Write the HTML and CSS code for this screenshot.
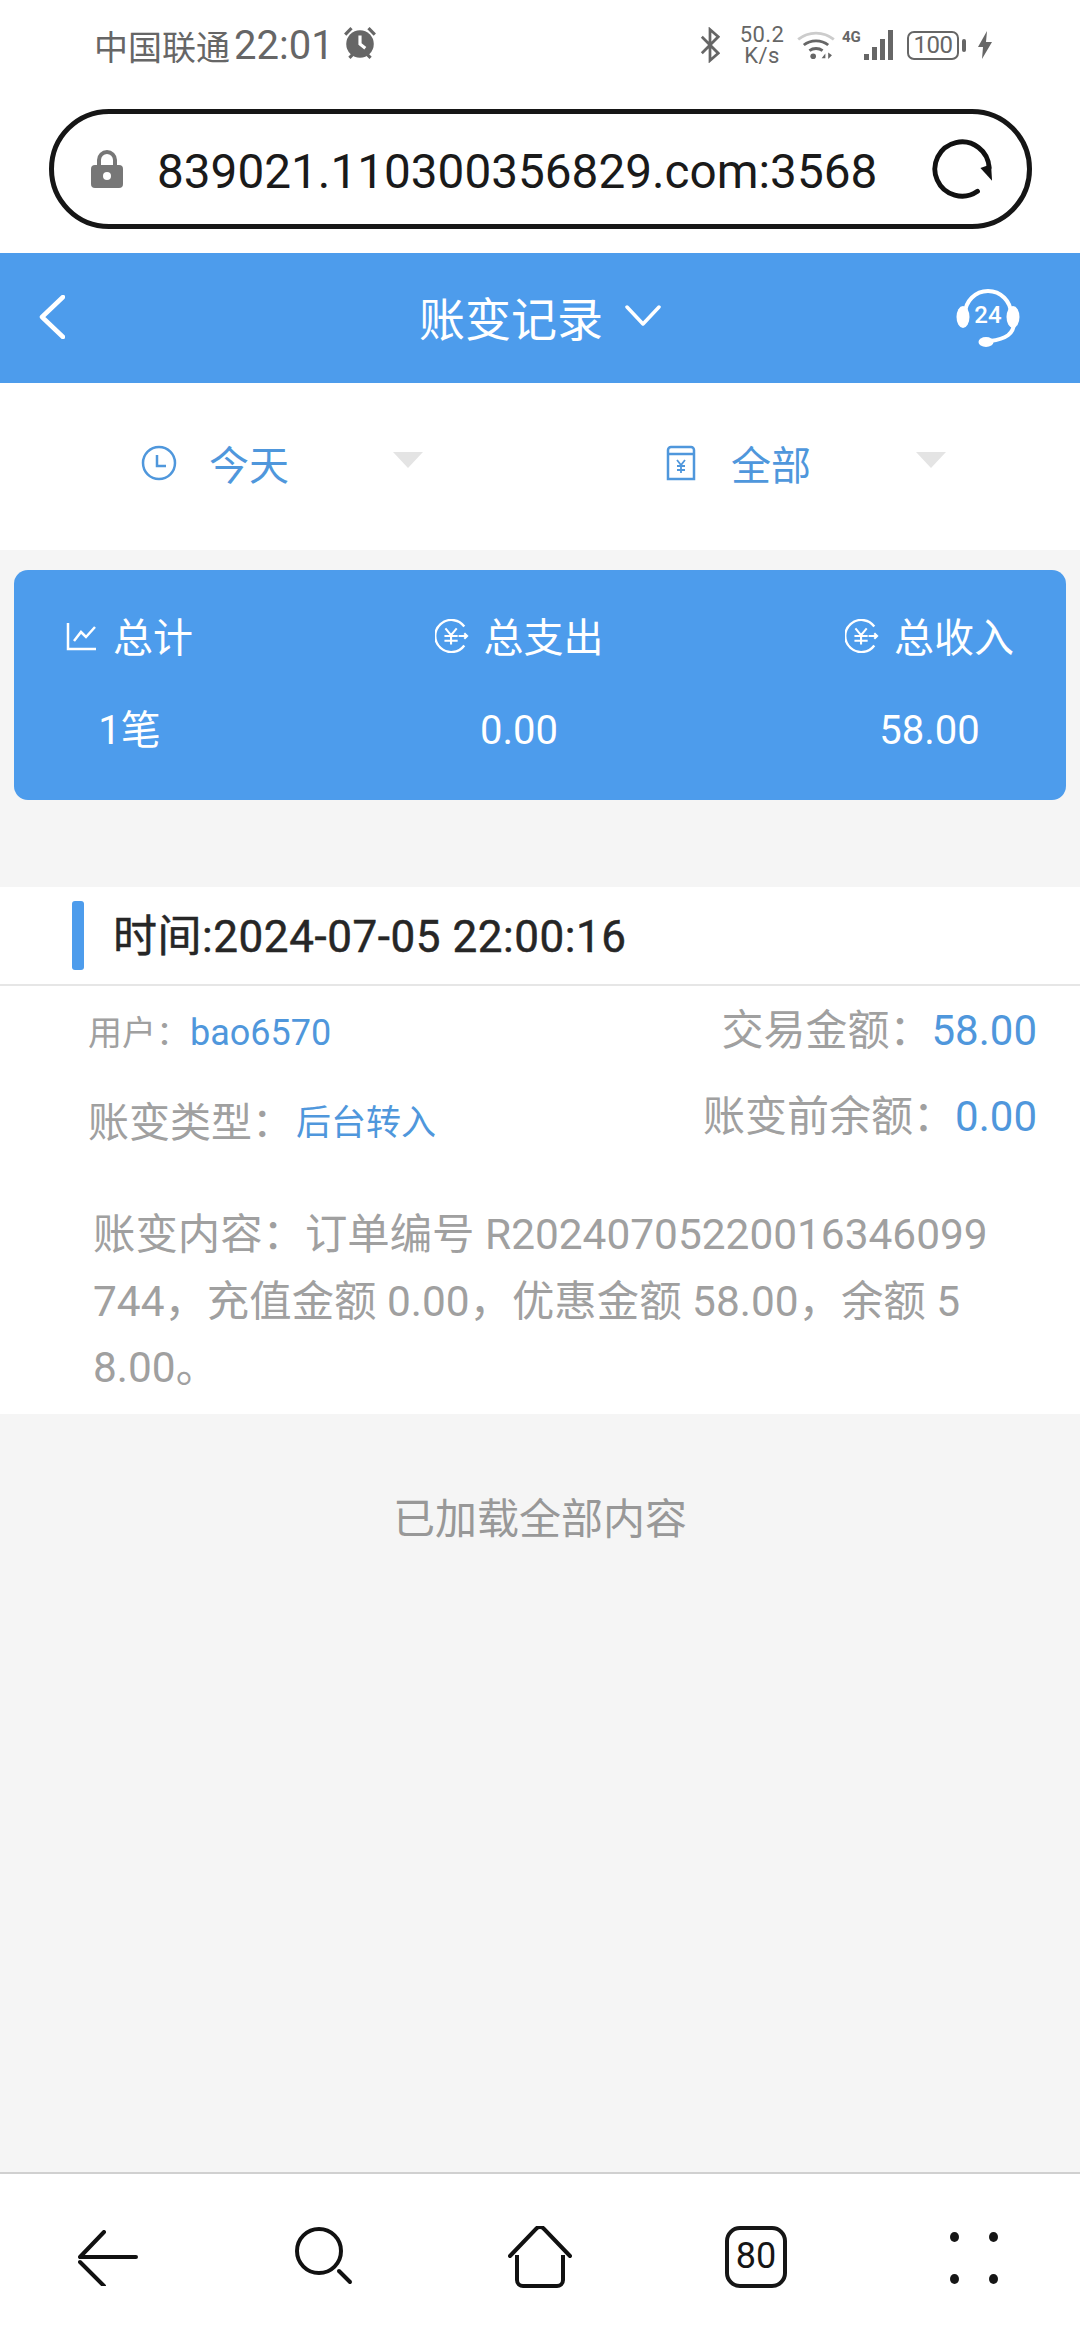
FILE: index.html
```html
<!DOCTYPE html>
<html lang="zh-CN">
<head>
<meta charset="utf-8">
<title>账变记录</title>
<link rel="stylesheet" href="styles.css">
</head>
<body>
<div class="phone">
  <div class="status">
    <div class="status-left">
      <span class="carrier">中国联通</span>
      <span class="clock">22:01</span>
      <svg class="alarm" viewBox="0 0 34 34"><circle cx="17" cy="18" r="13" fill="#666"/><path d="M17 10v8l5 4" stroke="#fff" stroke-width="3" fill="none"/><path d="M3 9l6-6M31 9l-6-6M7 31l3-3M27 31l-3-3" stroke="#666" stroke-width="3"/></svg>
    </div>
    <div class="status-right">
      <svg class="bt" viewBox="0 0 22 36"><path d="M2 9l18 18-9 8V1l9 8L2 27" fill="none" stroke="#666" stroke-width="3"/></svg>
      <span class="speed">50.2<br>K/s</span>
      <svg class="wifi" viewBox="0 0 40 32"><path d="M1 10c11-9 27-9 38 0" fill="none" stroke="#ccc" stroke-width="3"/><path d="M7 16c7-6 19-6 26 0M13 22c4-3 10-3 14 0" fill="none" stroke="#666" stroke-width="3"/><circle cx="17" cy="28" r="3" fill="#666"/><path d="M26 30l4-5v5zM33 24v7l4-4z" fill="#666"/></svg>
      <span class="net">4G</span>
      <div class="signal"><i class="s1"></i><i class="s2"></i><i class="s3"></i><i class="s4"></i></div>
      <div class="battery"><span>100</span></div>
      <i class="cap"></i>
      <svg class="bolt" viewBox="0 0 14 28"><path d="M9 0L0 16h5l-1 12 10-17H8z" fill="#666"/></svg>
    </div>
  </div>

  <div class="address-wrap">
    <div class="address">
      <svg class="lock" viewBox="0 0 32 38"><path d="M8 17V10a8 8 0 0 1 16 0v7" fill="none" stroke="#777" stroke-width="4"/><rect y="15" width="32" height="23" rx="4" fill="#777"/><circle cx="16" cy="26" r="4" fill="#fff"/></svg>
      <span class="url">839021.110300356829.com:3568</span>
      <svg class="reload" viewBox="0 0 64 64"><path d="M48 55A28 28 0 1 1 60 31" fill="none" stroke="#111" stroke-width="5" stroke-linecap="round"/><path d="M51 31l11-4 1 17z" fill="#111"/></svg>
    </div>
  </div>

  <header class="topbar">
    <svg class="nav-back" viewBox="0 0 26 44"><path d="M24 2L3 22l21 20" fill="none" stroke="#fff" stroke-width="4.5" stroke-linecap="round" stroke-linejoin="round"/></svg>
    <div class="title">账变记录<svg class="chev" viewBox="0 0 36 22"><path d="M2 2l16 17L34 2" fill="none" stroke="#fff" stroke-width="3.5" stroke-linecap="round" stroke-linejoin="round"/></svg></div>
    <div class="support">
      <svg viewBox="0 0 64 60"><path d="M9 26a23 23 0 0 1 46 0M58 34c0 12-8 17-24 19" fill="none" stroke="#fff" stroke-width="4"/><ellipse cx="7" cy="29" rx="6.5" ry="11" fill="#fff"/><ellipse cx="57" cy="29" rx="6.5" ry="11" fill="#fff"/><ellipse cx="30" cy="54" rx="7.5" ry="5" fill="#fff"/></svg>
      <span>24</span>
    </div>
  </header>

  <section class="filters">
    <div class="filter">
      <svg class="f-icon" viewBox="0 0 36 36"><circle cx="18" cy="18" r="16" fill="none" stroke="#4f97dc" stroke-width="2.5"/><path d="M16 10v11h9" fill="none" stroke="#4f97dc" stroke-width="2.5"/></svg>
      <span class="f-label">今天</span>
      <i class="caret"></i>
    </div>
    <div class="filter filter-type">
      <svg class="f-icon-b" viewBox="0 0 30 36"><path d="M2 9V5a3 3 0 0 1 3-3h20a3 3 0 0 1 3 3v4M2 9h26v25H2z" fill="none" stroke="#4f97dc" stroke-width="2.5"/><path d="M11 15l4 5 4-5M15 20v8M11 21h8M11 25h8" fill="none" stroke="#4f97dc" stroke-width="1.8"/></svg>
      <span class="f-label">全部</span>
      <i class="caret"></i>
    </div>
  </section>

  <section class="summary">
    <div class="col">
      <div class="col-head"><svg class="s-icon s-chart" viewBox="0 0 32 30"><path d="M2 2v26h28M8 20l7-9 5 5 9-10" fill="none" stroke="#fff" stroke-width="2.5"/></svg>总计</div>
      <div class="col-val">1笔</div>
    </div>
    <div class="col">
      <div class="col-head"><svg class="s-icon" viewBox="0 0 36 36"><path d="M31 8a17 17 0 1 0 0 20" fill="none" stroke="#fff" stroke-width="2.5"/><path d="M11 10l6 7 6-7M17 17v10M10 18h14M10 23h14M25 18h9M31 15l3 3-3 3" fill="none" stroke="#fff" stroke-width="2.2"/></svg>总支出</div>
      <div class="col-val">0.00</div>
    </div>
    <div class="col">
      <div class="col-head"><svg class="s-icon" viewBox="0 0 36 36"><path d="M31 8a17 17 0 1 0 0 20" fill="none" stroke="#fff" stroke-width="2.5"/><path d="M11 10l6 7 6-7M17 17v10M10 18h14M10 23h14M25 18h9M31 15l3 3-3 3" fill="none" stroke="#fff" stroke-width="2.2"/></svg>总收入</div>
      <div class="col-val">58.00</div>
    </div>
  </section>

  <article class="record">
    <div class="record-head"><i class="mark"></i><span>时间:2024-07-05 22:00:16</span></div>
    <div class="record-body">
      <div class="row row-a">
        <div class="user">用户：<b>bao6570</b></div>
        <div class="money">交易金额：<b>58.00</b></div>
      </div>
      <div class="row row-b">
        <div class="kind">账变类型：<b>后台转入</b></div>
        <div class="money">账变前余额：<b>0.00</b></div>
      </div>
      <p class="detail">账变内容：订单编号 R20240705220016346099<br>744，充值金额 0.00，优惠金额 58.00，余额 5<br>8.00。</p>
    </div>
  </article>

  <div class="loaded">已加载全部内容</div>

  <nav class="toolbar">
    <svg class="t-back" viewBox="0 0 60 56"><path d="M26 2L2 27h56M2 32l24 24" fill="none" stroke="#111" stroke-width="4" stroke-linecap="round" stroke-linejoin="round"/></svg>
    <svg class="t-search" viewBox="0 0 58 58"><circle cx="24" cy="24" r="22" fill="none" stroke="#111" stroke-width="4"/><path d="M44 44l11 11" stroke="#111" stroke-width="4" stroke-linecap="round"/></svg>
    <svg class="t-home" viewBox="0 0 64 62"><path d="M2 30L28 3a5 5 0 0 1 8 0l26 27" fill="none" stroke="#111" stroke-width="4" stroke-linecap="round"/><path d="M9 29v25a6 6 0 0 0 6 6h34a6 6 0 0 0 6-6V29" fill="none" stroke="#111" stroke-width="4"/></svg>
    <div class="t-tabs">80</div>
    <div class="t-more"><i></i><i></i><i></i><i></i></div>
  </nav>
</div>
</body>
</html>
```
FILE: styles.css
```css
* { box-sizing: border-box; margin: 0; padding: 0; }
html, body { width: 1080px; height: 2340px; overflow: hidden; }
body { font-family: Roboto, "Noto Sans CJK SC", sans-serif; background: #f5f5f5; }
i { display: block; font-style: normal; }
svg { display: block; flex: none; }

.phone { width: 1080px; height: 2340px; display: flex; flex-direction: column; }

/* system status row */
.status { height: 90px; background: #fff; padding: 0 88px 0 94px; display: flex; justify-content: space-between; align-items: center; color: #666; }
.status-left { display: flex; align-items: center; }
.carrier { font-size: 34px; }
.clock { font-size: 40px; margin-left: 4px; }
.alarm { width: 36px; height: 36px; margin: 0 0 4px 8px; }
.status-right { display: flex; align-items: center; }
.bt { width: 20px; height: 36px; }
.speed { width: 46px; margin-left: 19px; font-size: 22px; line-height: 21px; letter-spacing: 0.4px; text-align: center; }
.wifi { width: 38px; height: 30px; margin-left: 12px; }
.net { font-size: 15px; font-weight: 700; margin: -16px 0 0 7px; width: 19px; }
.signal { display: flex; align-items: flex-end; gap: 3px; height: 30px; width: 32px; margin-left: 3px; }
.signal i { width: 5px; background: #666; }
.signal .s1 { height: 6px; }
.signal .s2 { height: 13px; }
.signal .s3 { height: 21px; }
.signal .s4 { height: 30px; }
.battery { width: 52px; height: 29px; margin-left: 11px; border: 2.5px solid #666; border-radius: 7px; font-size: 24px; line-height: 24px; text-align: center; letter-spacing: -0.5px; }
.cap { width: 4px; height: 13px; margin-left: 3px; background: #666; border-radius: 2px; }
.bolt { width: 14px; height: 28px; margin-left: 12px; }

/* browser address field */
.address-wrap { height: 163px; background: #fff; padding: 19px 48px 0 49px; }
.address { height: 120px; border: 5px solid #161616; border-radius: 60px; display: flex; align-items: center; padding: 0 34px 0 37px; }
.lock { width: 32px; height: 38px; }
.url { margin-left: 34px; padding-top: 6px; font-size: 47.7px; color: #1a1a1a; white-space: nowrap; flex: 1; }
.reload { width: 62px; height: 62px; }

/* page header */
.topbar { height: 130px; background: #4d9cec; position: relative; display: flex; align-items: center; justify-content: center; }
.nav-back { position: absolute; left: 39px; top: 42px; width: 26px; height: 44px; }
.title { display: flex; align-items: center; color: #fff; font-size: 46px; padding-bottom: 5px; }
.chev { width: 36px; height: 22px; margin-left: 22px; }
.support { position: absolute; left: 956px; top: 35px; width: 64px; height: 60px; }
.support svg { width: 64px; height: 60px; }
.support span { position: absolute; left: 0; right: 0; top: 13px; color: #fff; font-size: 24px; font-weight: 500; line-height: 28px; text-align: center; }

/* filter selectors */
.filters { height: 167px; background: #fff; display: flex; padding: 0 0 8px; }
.filter { position: relative; width: 540px; display: flex; align-items: center; padding-left: 141px; color: #4f97dc; }
.filter-type { padding-left: 126px; }
.f-icon { width: 36px; height: 36px; }
.f-icon-b { width: 30px; height: 36px; }
.f-label { font-size: 40px; margin-left: 32px; }
.filter-type .f-label { margin-left: 35px; }
.caret { position: absolute; left: 393px; top: 69px; border: 15px solid transparent; border-top: 16px solid #e4e4e4; border-bottom: 0; }
.filter-type .caret { left: 376px; }

/* totals card */
.summary { margin: 20px 14px 0; height: 230px; background: #4d9cec; border-radius: 14px; color: #fff; display: flex; justify-content: space-between; padding: 0 52px 0 52px; }
.col { display: flex; flex-direction: column; align-items: center; padding-top: 44px; }
.col-head { display: flex; align-items: center; font-size: 40px; line-height: 50px; }
.s-icon { width: 34px; height: 34px; margin-right: 15px; margin-top: -6px; }
.s-chart { width: 32px; height: 30px; }
.col-val { font-size: 40px; line-height: 50px; margin-top: 42px; }

/* ledger record */
.record { margin-top: 87px; background: #fff; height: 527px; }
.record-head { height: 99px; border-bottom: 2px solid #e6e6e6; display: flex; align-items: center; padding: 0 0 0 72px; color: #262626; font-size: 44px; letter-spacing: 0.55px; -webkit-text-stroke: 0.5px #262626; }
.record-head span { margin-top: -5px; }
.mark { width: 12px; height: 69px; border-radius: 3px; background: #4d9cec; margin-right: 29px; }
.record-body { padding: 0 43px 0 88px; color: #a0a0a0; }
.row { display: flex; justify-content: space-between; align-items: center; }
.row b { font-weight: 400; color: #4f97dc; }
.row-a { height: 64px; margin-top: 10px; }
.row-b { height: 64px; margin-top: 22px; }
.user { font-size: 34px; margin-top: 4px; }
.user b { font-size: 36px; }
.kind { font-size: 41px; margin-top: 10px; display: flex; align-items: center; }
.kind b { font-size: 35px; margin-left: 3px; }
.money { font-size: 42px; margin-top: -3px; }
.money b { font-size: 42px; }
.detail { margin: 56px 0 0 5px; font-size: 42.4px; line-height: 66.5px; white-space: nowrap; }

.loaded { margin-top: 76px; text-align: center; color: #989898; font-size: 42px; line-height: 60px; }

/* browser toolbar */
.toolbar { margin-top: auto; height: 168px; background: #fff; border-top: 2px solid #d0d0d0; position: relative; }
.t-back { position: absolute; left: 78px; top: 56px; width: 60px; height: 56px; }
.t-search { position: absolute; left: 295px; top: 53px; width: 58px; height: 58px; }
.t-home { position: absolute; left: 508px; top: 52px; width: 64px; height: 62px; }
.t-tabs { position: absolute; left: 725px; top: 52px; width: 62px; height: 62px; border: 4.5px solid #161616; border-radius: 15px; text-align: center; font-size: 36px; line-height: 53px; color: #161616; }
.t-more { position: absolute; left: 950px; top: 58px; width: 48px; height: 52px; display: grid; grid-template-columns: 1fr 1fr; justify-content: space-between; align-content: space-between; justify-items: center; }
.t-more i { width: 9px; height: 10px; border-radius: 50%; background: #161616; }
.t-more i:nth-child(odd) { justify-self: start; }
.t-more i:nth-child(even) { justify-self: end; }
```
